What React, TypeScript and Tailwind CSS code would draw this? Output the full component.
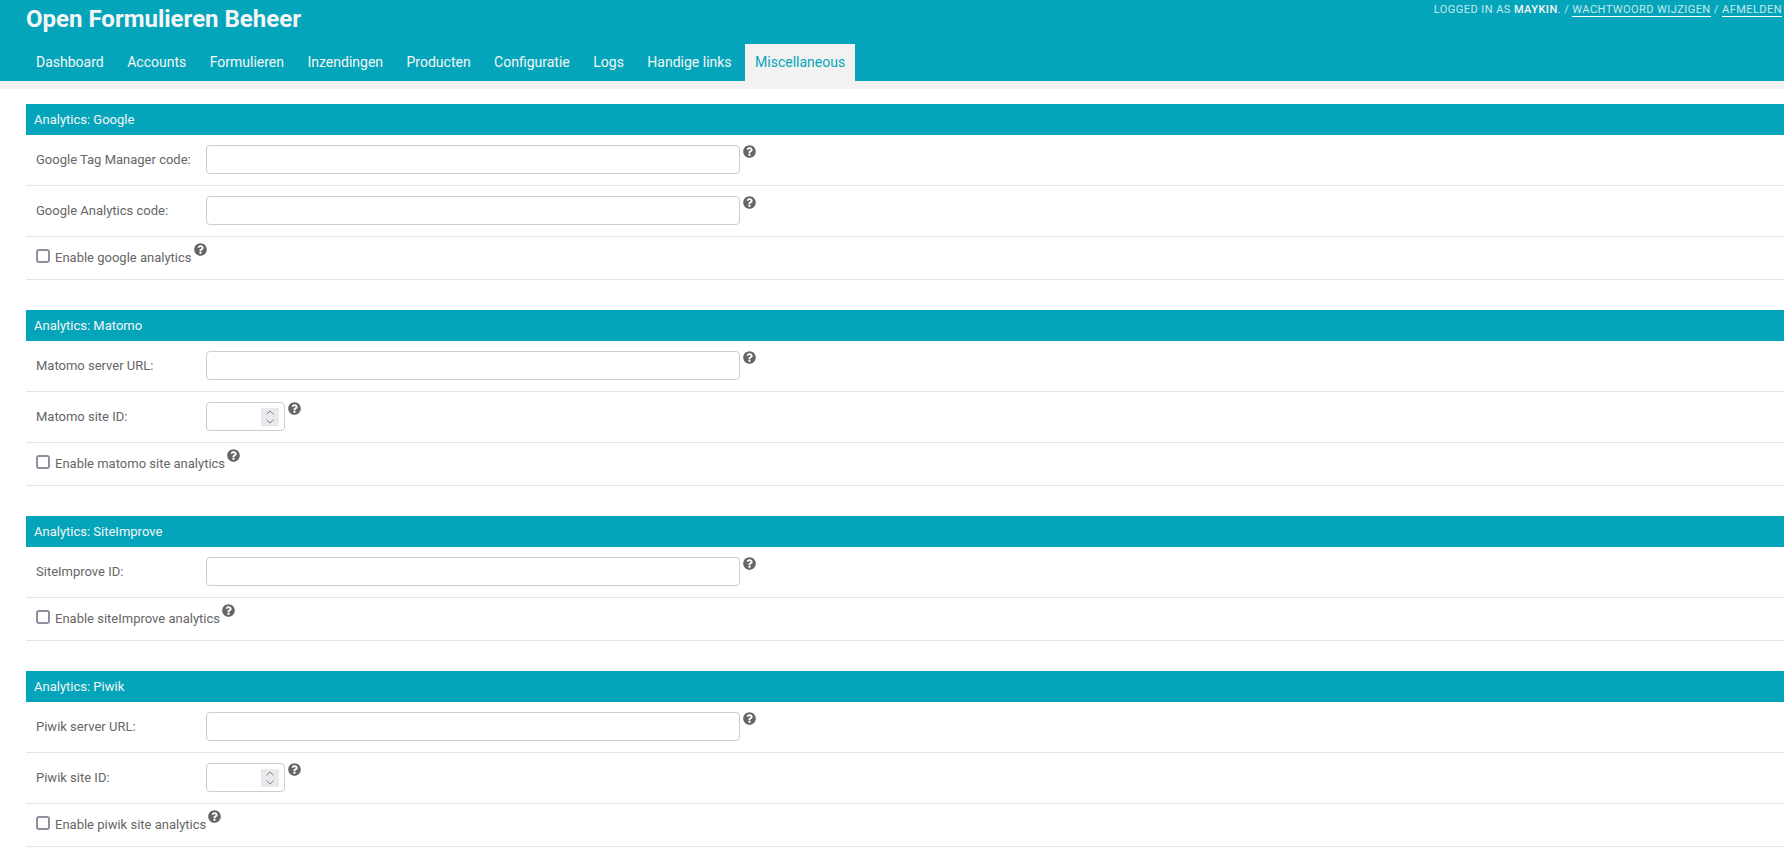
import { ChevronDown, ChevronUp } from "lucide-react";

const tabs = [
  "Dashboard",
  "Accounts",
  "Formulieren",
  "Inzendingen",
  "Producten",
  "Configuratie",
  "Logs",
  "Handige links",
];

type Field = { label: string; type: "text" | "number" | "check" };

const sections: { title: string; fields: Field[] }[] = [
  {
    title: "Analytics: Google",
    fields: [
      { label: "Google Tag Manager code:", type: "text" },
      { label: "Google Analytics code:", type: "text" },
      { label: "Enable google analytics", type: "check" },
    ],
  },
  {
    title: "Analytics: Matomo",
    fields: [
      { label: "Matomo server URL:", type: "text" },
      { label: "Matomo site ID:", type: "number" },
      { label: "Enable matomo site analytics", type: "check" },
    ],
  },
  {
    title: "Analytics: SiteImprove",
    fields: [
      { label: "SiteImprove ID:", type: "text" },
      { label: "Enable siteImprove analytics", type: "check" },
    ],
  },
  {
    title: "Analytics: Piwik",
    fields: [
      { label: "Piwik server URL:", type: "text" },
      { label: "Piwik site ID:", type: "number" },
      { label: "Enable piwik site analytics", type: "check" },
    ],
  },
];

function HelpIcon() {
  return (
    <svg viewBox="0 0 512 512" className="h-[13px] w-[13px] fill-[#666]">
      <path d="M504 256c0 136.997-111.043 248-248 248S8 392.997 8 256C8 119.083 119.043 8 256 8s248 111.083 248 248zM262.655 90c-54.497 0-89.255 22.957-116.549 63.758-3.536 5.286-2.353 12.415 2.715 16.258l34.699 26.31c5.205 3.947 12.621 3.008 16.665-2.122 17.864-22.658 30.113-35.797 57.303-35.797 20.429 0 45.698 13.148 45.698 32.958 0 14.976-12.363 22.667-32.534 33.976C247.128 238.528 216 254.941 216 296v4c0 6.627 5.373 12 12 12h56c6.627 0 12-5.373 12-12v-1.333c0-28.462 83.186-29.647 83.186-106.667 0-58.002-60.165-102-116.531-102zM256 338c-25.365 0-46 20.635-46 46 0 25.364 20.635 46 46 46s46-20.636 46-46c0-25.365-20.635-46-46-46z" />
    </svg>
  );
}

function Row({ field }: { field: Field }) {
  if (field.type === "check") {
    return (
      <div className="flex h-[43px] items-start border-b border-[#e5e5e5] pl-[10px] pt-[7px]">
        <span className="mt-[5px] h-[14px] w-[14px] rounded-[3px] border-2 border-[#8f8f9d] bg-white" />
        <span className="ml-[5px] mt-[4px] text-[13px] leading-[19px] text-[#666]">{field.label}</span>
        <span className="ml-[2px] mt-[-1px]">
          <HelpIcon />
        </span>
      </div>
    );
  }
  return (
    <div className="flex h-[51px] items-start border-b border-[#e5e5e5] pl-[10px] pt-[10px]">
      <span className="mt-[6px] w-[170px] text-[13px] leading-[17px] text-[#666]">{field.label}</span>
      {field.type === "text" ? (
        <span className="h-[29px] w-[534px] rounded-[4px] border border-[#ccc] bg-white" />
      ) : (
        <span className="flex h-[29px] w-[79px] items-center justify-end rounded-[4px] border border-[#ccc] bg-white pr-[5px]">
          <span className="flex h-[18px] w-[18px] flex-col items-center justify-center bg-[#e9e9ed] text-[#6b6b6b]">
            <ChevronUp size={14} strokeWidth={1.6} className="-my-[2px]" />
            <ChevronDown size={14} strokeWidth={1.6} className="-my-[2px]" />
          </span>
        </span>
      )}
      <span className="ml-[3px]">
        <HelpIcon />
      </span>
    </div>
  );
}

export default function App() {
  return (
    <div className="min-h-[855px] overflow-hidden bg-white font-['Roboto',sans-serif]">
      <header className="relative h-[81px] bg-[#04a5bb]">
        <h1 className="pl-[26px] pt-[4px] text-[24px] font-bold leading-[30px] text-[#f5f5f5]">
          Open Formulieren Beheer
        </h1>
        <div className="absolute right-[2px] top-[3px] text-[11px] uppercase leading-[13px] tracking-[0.45px] text-[#c4e9ee]">
          Logged in as <strong className="font-medium text-[#f5f5f5]">maykin</strong>. /{" "}
          <a className="border-b border-white">Wachtwoord wijzigen</a> /{" "}
          <a className="border-b border-white">Afmelden</a>
        </div>
        <nav className="absolute bottom-0 left-[26px] flex h-[37px] text-[14px] leading-[37px]">
          {tabs.map((t) => (
            <span key={t} className="ml-[3.47px] px-[10px] text-[#f5f5f5] first:ml-0">
              {t}
            </span>
          ))}
          <span className="ml-[3.47px] bg-[#f2f2f2] px-[10px] text-[#04a5bb]">Miscellaneous</span>
        </nav>
      </header>
      <div className="h-[8px] bg-[#f2f2f2]" />
      <main className="flex flex-col gap-[30px] pl-[26px] pt-[15px]">
        {sections.map((s) => (
          <section key={s.title}>
            <h2 className="h-[31px] bg-[#04a5bb] pl-[8px] text-[13px] font-normal leading-[31px] text-[#f5f5f5]">
              {s.title}
            </h2>
            {s.fields.map((f) => (
              <Row key={f.label} field={f} />
            ))}
          </section>
        ))}
      </main>
    </div>
  );
}
